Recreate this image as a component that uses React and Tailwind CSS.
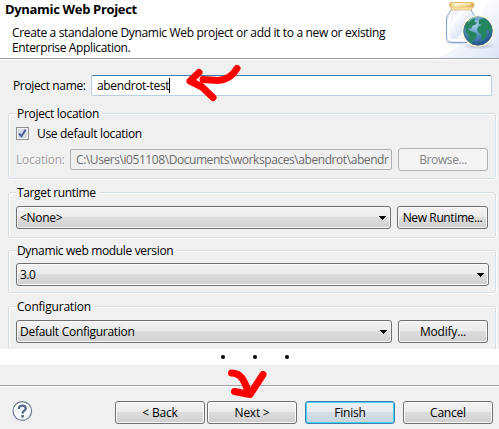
import React from "react";

function Group({ title, titleClass, className, children }) {
  return (
    <section
      className={`ml-2 w-[488px] rounded-[3px] border border-[#d5dfe5] pl-[7px] shadow-[1px_1px_0_#fff,inset_1px_1px_0_#fff] ${className}`}
    >
      <h2 className="-mt-[8px] h-4 w-fit bg-[#f0f0f0] pr-[3px] pl-[1px] leading-4">
        <span className={titleClass}>{title}</span>
      </h2>
      {children}
    </section>
  );
}

const face =
  "rounded-[3px] border border-[#707070] bg-[linear-gradient(#f3f3f3_0%,#ebebeb_48%,#dddddd_50%,#cfcfcf_100%)] shadow-[inset_0_0_0_1px_#fafafa]";

function Button({ children, className = "", textClass = "" }) {
  return (
    <button className={`flex h-[23px] items-center justify-center ${className}`}>
      <span className={textClass}>{children}</span>
    </button>
  );
}

function Select({ value, className, textClass }) {
  return (
    <div className={`flex h-[23px] items-center justify-between pr-[4px] pl-[3px] ${face} ${className}`}>
      <span className={textClass}>{value}</span>
      <svg width="7" height="4" viewBox="0 0 7 4" shapeRendering="crispEdges">
        <path d="M0 0h7v1h-1v1h-1v1h-1v1h-1v-1h-1v-1h-1v-1h-1z" fill="#000" />
      </svg>
    </div>
  );
}

function JarGlobe() {
  return (
    <svg width="64" height="58" viewBox="0 0 64 58">
      <defs>
        <linearGradient id="sky" x1="0" y1="0" x2="1" y2="1">
          <stop offset="0.35" stopColor="#fff" />
          <stop offset="1" stopColor="#dce4f6" />
        </linearGradient>
        <linearGradient id="glass" x1="0" y1="0" x2="1" y2="1">
          <stop offset="0" stopColor="#d3e0f2" />
          <stop offset="0.3" stopColor="#fafcff" />
          <stop offset="0.6" stopColor="#dfe7f5" />
          <stop offset="1" stopColor="#f6f9fe" />
        </linearGradient>
        <linearGradient id="lid" x1="0" y1="0" x2="1" y2="0">
          <stop offset="0" stopColor="#e5bd68" />
          <stop offset="0.25" stopColor="#fff4c8" />
          <stop offset="0.65" stopColor="#f3d58c" />
          <stop offset="1" stopColor="#d9a64b" />
        </linearGradient>
        <radialGradient id="sea" cx="0.38" cy="0.28" r="0.75">
          <stop offset="0" stopColor="#a9d4ea" />
          <stop offset="0.5" stopColor="#568fbd" />
          <stop offset="1" stopColor="#1c4f85" />
        </radialGradient>
        <radialGradient id="shade">
          <stop offset="0" stopColor="#8990ac" stopOpacity="0.6" />
          <stop offset="1" stopColor="#8990ac" stopOpacity="0" />
        </radialGradient>
      </defs>
      <path d="M0 58C24 52 47 26 51 0H64V58Z" fill="url(#sky)" />
      <ellipse cx="44" cy="46" rx="17" ry="3.5" fill="url(#shade)" />
      <ellipse cx="22" cy="42" rx="14" ry="3" fill="url(#shade)" />
      <path d="M16.5 9C16 12 11.5 14 11.5 19V37C11.5 41 13.5 42.5 17 42.5H35C38.5 42.5 40 40 40 37V19C40 14 36 12 36 9Z" fill="url(#glass)" stroke="#82a4cf" />
      <path d="M18 11C17 15 14 16 14 20V37C14 39 16 40 18 40H34" fill="none" stroke="#fff" strokeWidth="2" />
      <path d="M24 39L36 27" stroke="#fff" strokeWidth="5" opacity="0.6" />
      <rect x="14.5" y="2.5" width="24.5" height="5" rx="2" fill="url(#lid)" stroke="#e4bd6c" />
      <rect x="16" y="7" width="21" height="3" rx="1" fill="#f7df9e" stroke="#dfb466" strokeWidth="0.6" />
      <path d="M18 4H36" stroke="#fff8dc" />
      <circle cx="43" cy="31" r="15.8" fill="#fff8d5" />
      <circle cx="43" cy="31" r="14.3" fill="url(#sea)" stroke="#37678e" strokeWidth="0.8" />
      <path d="M30 27L31 23L34 20L38 18L41 19L39 21L42 23L40 25L37 26L36 29L33 28L35 31L39 32L42 34L41 38L38 40L37 44L34 41L34 36L31 32Z" fill="#26855f" />
      <path d="M44 20L48 18L53 21L56 26L57 31L55 33L53 29L51 31L52 34L50 39L47 40L46 34L43 32L42 29L44 26L47 25L44 24Z" fill="#23855d" />
      <path d="M33 22C37 17 43 16 49 18" fill="none" stroke="#c5e8d8" strokeWidth="1.3" opacity="0.6" />
    </svg>
  );
}

export default function App() {
  return (
    <main className="relative h-[429px] w-[499px] overflow-hidden bg-[#f0f0f0] font-['Open_Sans','Noto_Sans',sans-serif] text-[12px] leading-4 whitespace-nowrap text-black">
      <header className="flex h-[60px] justify-between border-b border-white bg-white shadow-[inset_0_-1px_0_#a0a0a0]">
        <div>
          <h1 className="pt-[1px] pl-[5px] text-[13px] leading-4 font-bold">
            <span className="tracking-[-0.33px]">Dynamic Web Project</span>
          </h1>
          <p className="pt-[8px] pl-[12px] leading-[15px]">
            <span className="tracking-[-0.34px]">Create a standalone Dynamic Web project or add it to a new or existing</span>
            <br />
            <span className="tracking-[-0.36px]">Enterprise Application.</span>
          </p>
        </div>
        <div className="h-[58px]"><JarGlobe /></div>
      </header>

      <div className="mt-[15px] flex h-[21px] items-center">
        <label className="w-[91px] pl-[13px]"><span className="tracking-[-0.36px]">Project name:</span></label>
        <div className="flex h-[21px] w-[401px] items-center rounded-[2px] border border-[#b5cfe7] border-t-[#3d7bad] bg-white pl-[5px]">
          <span className="tracking-[-0.35px]">abendrot-test</span>
          <span className="h-[15px] w-px bg-black" />
        </div>
      </div>

      <Group title="Project location" titleClass="tracking-[-0.3px]" className="mt-[17px] h-[66px]">
        <div className="mt-[5px] flex h-[13px] items-center">
          <span className="flex h-[13px] w-[13px] items-center justify-center border border-[#8e8f8f] bg-[#d5dbe2] shadow-[inset_0_0_0_1px_#f4f4f4]">
            <svg width="9" height="9" viewBox="0 0 9 9">
              <path d="M1 4.3L3.4 7.2L7.6 0.8" fill="none" stroke="#4b619c" strokeWidth="2" />
            </svg>
          </span>
          <span className="ml-[8px] tracking-[-0.33px]">Use default location</span>
        </div>
        <div className="mt-[8px] flex h-[23px] items-center">
          <span className="w-[54px] text-[#a0a0a0] [text-shadow:1px_1px_0_#fff]"><span className="tracking-[-0.25px]">Location:</span></span>
          <div className="flex h-[21px] w-[322px] items-center rounded-[2px] border border-[#afafaf] pr-[2px] pl-[5px] text-[#6d6d6d]">
            <span className="w-full overflow-hidden tracking-[-0.43px]">C:\Users\i051108\Documents\workspaces\abendrot\abendr</span>
          </div>
          <Button className="ml-[6px] w-[90px] rounded-[3px] border border-[#adb2b5] bg-[#f4f4f4] text-[#838383]" textClass="tracking-[-0.4px]">Browse...</Button>
        </div>
      </Group>

      <Group title="Target runtime" titleClass="tracking-[-0.36px]" className="mt-[13px] h-[46px]">
        <div className="mt-[5px] flex gap-[6px]">
          <Select value="<None>" className="w-[375px]" textClass="tracking-[-0.3px]" />
          <Button className={`w-[91px] ${face}`} textClass="tracking-[-0.38px]">New Runtime...</Button>
        </div>
      </Group>

      <Group title="Dynamic web module version" titleClass="tracking-[-0.34px]" className="mt-[12px] h-[43px]">
        <div className="mt-[4px]">
          <Select value="3.0" className="w-[473px]" textClass="tracking-[-0.5px]" />
        </div>
      </Group>

      <div className="h-[56px] overflow-hidden pt-[13px]">
        <Group title="Configuration" titleClass="tracking-[-0.2px]" className="h-[60px]">
          <div className="mt-[5px] flex gap-[6px]">
            <Select value="Default Configuration" className="w-[376px]" textClass="tracking-[-0.28px]" />
            <Button className={`w-[90px] ${face}`} textClass="tracking-[-0.2px]">Modify...</Button>
          </div>
        </Group>
      </div>

      <div className="flex h-4 items-center gap-7 bg-white pl-[221px]">
        <i className="h-1 w-1 rounded-full bg-black" />
        <i className="h-1 w-1 rounded-full bg-black" />
        <i className="h-1 w-1 rounded-full bg-black" />
      </div>
      <div className="mt-[20px] h-[2px] border-t border-b border-t-[#a0a0a0] border-b-white" />

      <footer className="flex items-start pt-[14px] pl-[12px]">
        <svg width="21" height="21" viewBox="0 0 21 21">
          <circle cx="10.3" cy="10" r="9.3" fill="#f7f8fa" stroke="#6c7c97" strokeWidth="1.2" />
          <path d="M7 8V7.2C7 3.7 13.7 3.7 13.7 7.4C13.7 9.8 10.6 9.5 10.6 12.5" fill="none" stroke="#576b8e" strokeWidth="2.3" />
          <rect x="9.3" y="14" width="2.6" height="2.5" fill="#576b8e" />
        </svg>
        <Button className={`ml-[82px] w-[90px] ${face}`} textClass="tracking-[-0.2px]">&lt; Back</Button>
        <Button className={`ml-[2px] w-[90px] ${face}`} textClass="tracking-[-0.25px]">Next &gt;</Button>
        <Button
          className="ml-[8px] w-[90px] rounded-[3px] border border-[#3c7fb1] bg-[linear-gradient(#f0f3f5_0%,#e5eaed_48%,#d5dee4_50%,#c8d4dc_100%)] shadow-[inset_0_0_0_1px_#48d0f6]"
          textClass="tracking-[-0.2px]"
        >
          Finish
        </Button>
        <Button className={`ml-[8px] w-[90px] ${face}`} textClass="tracking-[-0.2px]">Cancel</Button>
      </footer>

      <svg className="pointer-events-none absolute inset-0" width="499" height="429" viewBox="0 0 499 429" fill="none" stroke="#f00" strokeLinecap="round" strokeLinejoin="round">
        <path d="M237 68.5C232 77 226 80 218 80.5L203 79.5" strokeWidth="7" />
        <path d="M199 72.5L190 81L202 87L213 97.5" strokeWidth="7" />
        <path d="M231.5 373C241 373 244 380 248.5 392" strokeWidth="7" />
        <path d="M234.5 391.5L250 394.5L263 374.5" strokeWidth="7" />
      </svg>
    </main>
  );
}
